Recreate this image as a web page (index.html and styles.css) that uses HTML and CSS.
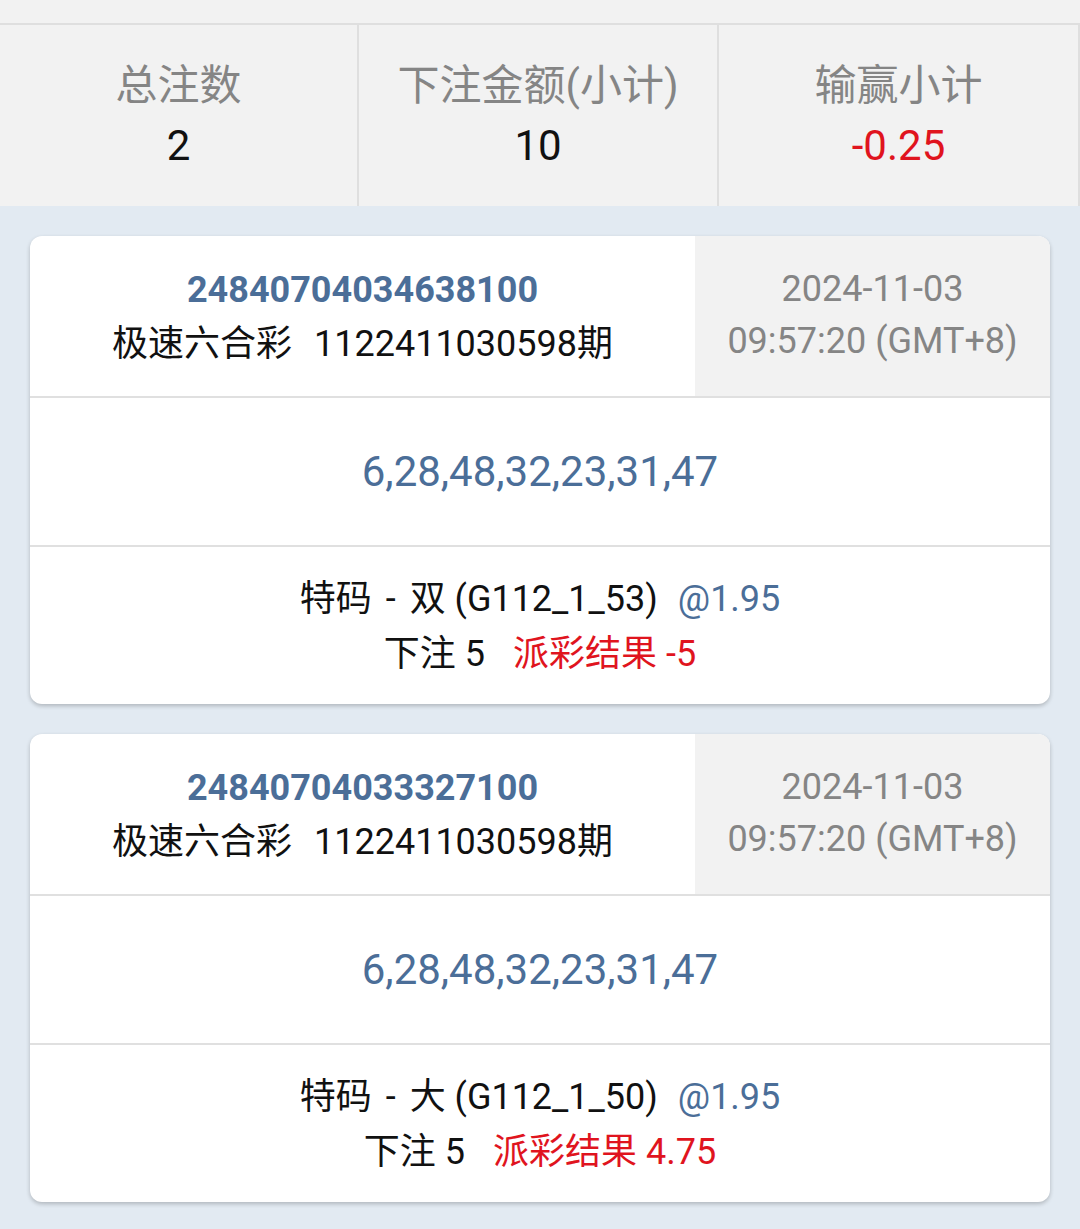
FILE: index.html
```html
<!DOCTYPE html>
<html lang="zh">
<head>
<meta charset="utf-8">
<link rel="stylesheet" href="styles.css">
</head>
<body>
<div class="topbar"></div>
<div class="summary">
  <div class="cell"><div class="label">总注数</div><div class="value">2</div></div>
  <div class="cell"><div class="label">下注金额(小计)</div><div class="value">10</div></div>
  <div class="cell"><div class="label">输赢小计</div><div class="value neg">-0.25</div></div>
</div>
<div class="list">
  <div class="card">
    <div class="head">
      <div class="info">
        <div class="order">24840704034638100</div>
        <div class="game">极速六合彩<span class="issue">1122411030598期</span></div>
      </div>
      <div class="time">
        <div>2024-11-03</div>
        <div>09:57:20 (GMT+8)</div>
      </div>
    </div>
    <div class="nums">6,28,48,32,23,31,47</div>
    <div class="bet">
      <div>特码<span class="dash">-</span>双 (G112_1_53)<span class="odds">@1.95</span></div>
      <div>下注 5<span class="result">派彩结果 -5</span></div>
    </div>
  </div>
  <div class="card">
    <div class="head">
      <div class="info">
        <div class="order">24840704033327100</div>
        <div class="game">极速六合彩<span class="issue">1122411030598期</span></div>
      </div>
      <div class="time">
        <div>2024-11-03</div>
        <div>09:57:20 (GMT+8)</div>
      </div>
    </div>
    <div class="nums">6,28,48,32,23,31,47</div>
    <div class="bet">
      <div>特码<span class="dash">-</span>大 (G112_1_50)<span class="odds">@1.95</span></div>
      <div>下注 5<span class="result">派彩结果 4.75</span></div>
    </div>
  </div>
</div>
</body>
</html>
```

FILE: styles.css
```css
html, body {
  margin: 0;
  padding: 0;
}
body {
  background: #e2eaf2;
  font-family: "Roboto", "Noto Sans CJK SC", sans-serif;
  color: #111;
  min-height: 1229px;
}
.topbar {
  height: 23px;
  background: #f2f2f2;
  border-bottom: 2px solid #dfdfdf;
}
.summary {
  display: grid;
  grid-template-columns: 359px 360px 361px;
  background: #f2f2f2;
}
.cell {
  border-right: 2px solid #dfdfdf;
  text-align: center;
  padding: 31px 0 30px;
}
.label {
  font-size: 42px;
  line-height: 60px;
  color: #858585;
}
.value {
  font-size: 42px;
  line-height: 60px;
  color: #111;
}
.value.neg {
  color: #e0141e;
}
.list {
  padding: 30px 30px 27px;
  display: flex;
  flex-direction: column;
  gap: 30px;
}
.card {
  background: #fff;
  border-radius: 12px;
  box-shadow: 0 2px 4px rgba(0, 0, 0, 0.22);
  overflow: hidden;
}
.head {
  display: flex;
  border-bottom: 2px solid #e0e0e0;
}
.info {
  width: 665px;
  text-align: center;
  padding: 27px 0 25px;
  font-size: 36px;
  line-height: 54px;
}
.order {
  font-weight: 700;
  color: #4b6e98;
  font-size: 36px;
}
.issue {
  margin-left: 22px;
}
.time {
  flex: 1;
  background: #f2f2f2;
  color: #858585;
  text-align: center;
  padding: 27px 0 25px;
  font-size: 36px;
  line-height: 52px;
}
.nums {
  height: 147px;
  display: flex;
  align-items: center;
  justify-content: center;
  font-size: 42px;
  color: #4b6e98;
  border-bottom: 2px solid #e0e0e0;
}
.bet {
  text-align: center;
  font-size: 36px;
  line-height: 55px;
  padding: 25px 0 22px;
}
.dash {
  margin: 0 14px;
}
.odds {
  color: #4b6e98;
  margin-left: 20px;
}
.result {
  color: #e0141e;
  margin-left: 28px;
}
```
